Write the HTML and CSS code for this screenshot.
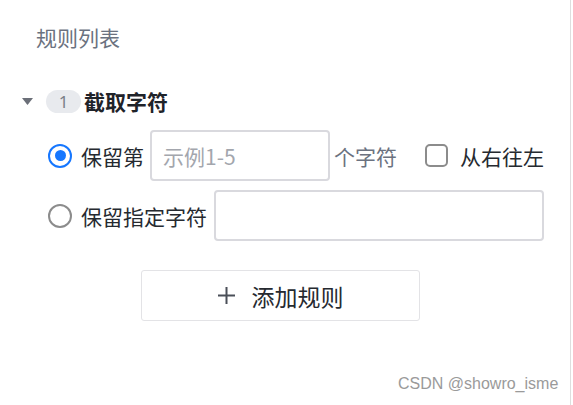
FILE: index.html
```html
<!DOCTYPE html>
<html lang="zh-CN">
<head>
	<meta charset="UTF-8">
	<title>规则列表</title>
	<link rel="stylesheet" href="styles.css">
</head>
<body>
	<div class="panel">
		<div class="panel_title">规则列表</div>

		<!-- 规则 1 -->
		<div class="rule_head">
			<svg class="caret" width="11" height="7" viewBox="0 0 11 7"><path d="M0 0H11L5.5 7Z" fill="#6b6f78"/></svg>
			<span class="badge">1</span>
			<span class="rule_name">截取字符</span>
		</div>

		<div class="option_row first">
			<span class="radio checked"></span>
			<span class="label">保留第</span>
			<input class="field short" type="text" placeholder="示例1-5">
			<span class="suffix">个字符</span>
			<span class="checkbox"></span>
			<span class="label check_label">从右往左</span>
		</div>

		<div class="option_row">
			<span class="radio"></span>
			<span class="label">保留指定字符</span>
			<input class="field long" type="text">
		</div>

		<div class="add_btn">
			<svg width="17" height="17" viewBox="0 0 17 17"><path d="M8.5 0V17M0 8.5H17" stroke="#4a4f58" stroke-width="2"/></svg>
			<span>添加规则</span>
		</div>

		<div class="mark">CSDN @showro_isme</div>
	</div>
</body>
</html>
```

FILE: styles.css
```css
* {
	margin: 0;
	padding: 0;
	box-sizing: border-box;
}

body {
	background-color: #fff;
	font-family: "Noto Sans CJK SC", "Noto Sans", sans-serif;
	color: #262a30;
}

.panel {
	width: 571px;
	height: 405px;
	border-right: 1px solid #dedede;
	position: relative;
}

.panel_title {
	padding: 23px 0 0 36px;
	font-size: 21px;
	line-height: 28px;
	color: #6b7280;
}

.rule_head {
	display: flex;
	align-items: center;
	height: 28px;
	margin-top: 36px;
	padding-left: 22px;
}

.badge {
	width: 35px;
	height: 23px;
	margin-left: 13px;
	border-radius: 12px;
	background-color: #e8eaee;
	font-family: "Noto Sans", sans-serif;
	font-size: 17px;
	line-height: 23px;
	text-align: center;
	color: #7a7f88;
}

.rule_name {
	margin-left: 3px;
	font-size: 21px;
	font-weight: bold;
	color: #1f2329;
}

.option_row {
	display: flex;
	align-items: center;
	margin-top: 9px;
	padding-left: 48px;
}

.option_row.first {
	margin-top: 15px;
}

.radio {
	width: 24px;
	height: 24px;
	border: 2px solid #8c8c8c;
	border-radius: 50%;
	position: relative;
}

.radio.checked {
	border-color: #1677ff;
}

.radio.checked::after {
	content: "";
	position: absolute;
	left: 4.5px;
	top: 4.5px;
	width: 11px;
	height: 11px;
	border-radius: 50%;
	background-color: #1677ff;
}

.label {
	margin-left: 9px;
	font-size: 21px;
	line-height: 28px;
}

.field {
	height: 51px;
	margin-left: 6px;
	padding: 0 11px;
	border: 2px solid #d9d9de;
	border-radius: 4px;
	font-family: "Noto Sans CJK SC", "Noto Sans", sans-serif;
	font-size: 21px;
	color: #262a30;
	outline: none;
}

.field::placeholder {
	color: #a3a6ad;
}

.field.short {
	width: 180px;
}

.field.long {
	width: 330px;
	margin-left: 7px;
}

.suffix {
	margin-left: 4px;
	font-size: 21px;
	color: #6b7280;
}

.checkbox {
	width: 23px;
	height: 23px;
	margin-left: 28px;
	border: 2px solid #8c8c8c;
	border-radius: 5px;
}

.check_label {
	margin-left: 12px;
}

.add_btn {
	display: flex;
	align-items: center;
	justify-content: center;
	gap: 17px;
	width: 279px;
	height: 51px;
	margin: 29px 0 0 141px;
	border: 1px solid #e3e3e6;
	border-radius: 3px;
	font-size: 23px;
	color: #262a30;
}

.mark {
	position: absolute;
	left: 398px;
	top: 375px;
	font-family: "Liberation Sans", Arial, sans-serif;
	font-size: 16px;
	line-height: 18px;
	color: #9a9a9a;
}
```
